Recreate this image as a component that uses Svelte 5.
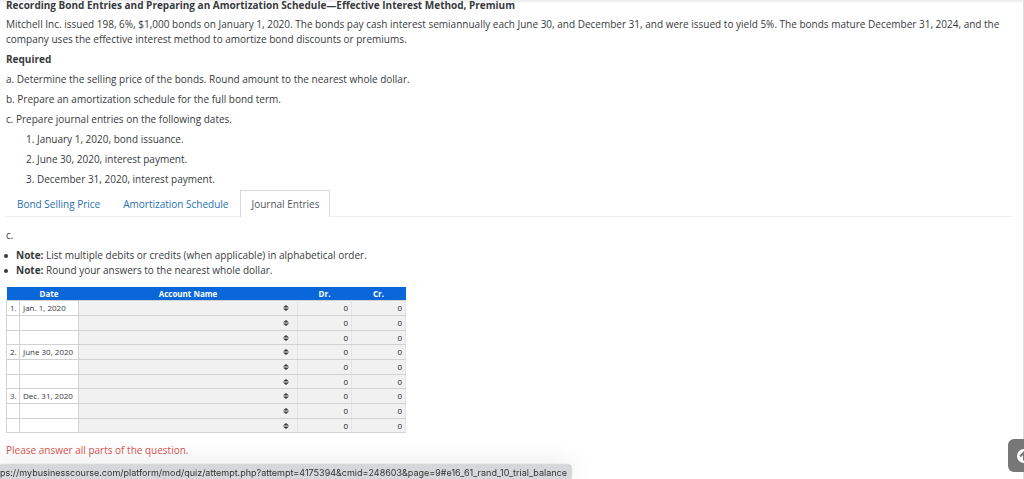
<script>
  const groups = [
    { no: '1.', date: 'Jan. 1, 2020' },
    { no: '2.', date: 'June 30, 2020' },
    { no: '3.', date: 'Dec. 31, 2020' }
  ];
  const lines = [0, 1, 2];
  const tabs = ['Bond Selling Price', 'Amortization Schedule', 'Journal Entries'];
  let active = $state(2);
</script>

<main>
  <h1>Recording Bond Entries and Preparing an Amortization Schedule—Effective Interest Method, Premium</h1>
  <p>Mitchell Inc. issued 198, 6%, $1,000 bonds on January 1, 2020. The bonds pay cash interest semiannually each June 30, and December 31, and were issued to yield 5%. The bonds mature December 31, 2024, and the company uses the effective interest method to amortize bond discounts or premiums.</p>
  <p><strong>Required</strong></p>
  <p>a. Determine the selling price of the bonds. Round amount to the nearest whole dollar.</p>
  <p>b. Prepare an amortization schedule for the full bond term.</p>
  <p>c. Prepare journal entries on the following dates.</p>
  <div class="dates">
    <p>1. January 1, 2020, bond issuance.</p>
    <p>2. June 30, 2020, interest payment.</p>
    <p>3. December 31, 2020, interest payment.</p>
  </div>

  <div class="tabs" role="tablist">
    {#each tabs as tab, i}
      <button type="button" role="tab" aria-selected={active === i} class:active={active === i} onclick={() => (active = i)}>{tab}</button>
    {/each}
  </div>

  <p class="part">c.</p>
  <ul>
    <li><strong>Note:</strong> List multiple debits or credits (when applicable) in alphabetical order.</li>
    <li><strong>Note:</strong> Round your answers to the nearest whole dollar.</li>
  </ul>

  <table>
    <colgroup>
      <col class="no" /><col class="date" /><col class="account" /><col class="amount" /><col class="amount" />
    </colgroup>
    <thead>
      <tr><th></th><th>Date</th><th>Account Name</th><th>Dr.</th><th>Cr.</th></tr>
    </thead>
    {#each groups as group}
      <tbody>
        {#each lines as line}
          <tr>
            <td class="label">{line === 0 ? group.no : ''}</td>
            <td class="label">{line === 0 ? group.date : ''}</td>
            <td class="field">
              <div class="picker">
                <select aria-label="Account name, {group.date}, line {line + 1}"><option></option></select>
                <svg viewBox="0 0 6 6" aria-hidden="true"><path d="M3 0 6 2.5H0zM3 6 0 3.5H6z" /></svg>
              </div>
            </td>
            <td class="field"><input aria-label="Debit, {group.date}, line {line + 1}" value="0" /></td>
            <td class="field"><input aria-label="Credit, {group.date}, line {line + 1}" value="0" /></td>
          </tr>
        {/each}
      </tbody>
    {/each}
  </table>

  <p class="warning">Please answer all parts of the question.</p>
</main>

<button type="button" class="top" aria-label="Back to top">
  <svg viewBox="0 0 16 16" aria-hidden="true">
    <circle cx="8" cy="8" r="8" fill="#fff" />
    <path d="M8 13V4.5M3.5 8.6 8 4.1l4.5 4.5" fill="none" stroke="#777" stroke-width="2.4" />
  </svg>
</button>

<div class="status">ps://mybusinesscourse.com/platform/mod/quiz/attempt.php?attempt=4175394&amp;cmid=248603&amp;page=9#e16_61_rand_10_trial_balance</div>

<style>
  :global(body) {
    background: #fff;
    color: #373a3c;
    font: 10px/15px "Open Sans", "Noto Sans", sans-serif;
    overflow: hidden;
  }
  main {
    padding: 0 11px 0 6px;
    border-right: 1px solid #ddd;
    box-shadow: inset 0 3px 2px -1px #eee;
  }
  h1 {
    margin: 0 0 6px;
    font-size: 10px;
    line-height: 11px;
    font-weight: 700;
  }
  p {
    margin: 0 0 5px;
  }
  strong {
    font-weight: 700;
  }
  .dates {
    padding-left: 20px;
  }
  .dates p:last-child {
    margin-bottom: 3px;
  }
  .tabs {
    display: flex;
    border-bottom: 1px solid #eceeef;
  }
  .tabs button {
    margin: 0 1px -1px 0;
    padding: 6px 10px 5px;
    border: 1px solid transparent;
    border-bottom: 0;
    background: none;
    color: #1f70b0;
    font: inherit;
  }
  .tabs .active {
    border-color: #d5dae0;
    background: #fff;
    color: #55595c;
  }
  .part {
    margin: 11px 0 5px;
  }
  ul {
    margin: 0 0 9px;
    padding: 0;
    list-style: none;
  }
  li {
    display: flex;
    align-items: center;
    white-space: pre;
  }
  li::before {
    content: "";
    width: 4px;
    height: 4px;
    margin: 0 8px 0 -2px;
    border-radius: 50%;
    background: #373a3c;
  }
  table {
    width: 400px;
    table-layout: fixed;
    border-collapse: collapse;
    font-size: 8px;
    line-height: 12px;
  }
  .no { width: 13px; }
  .date { width: 59px; }
  .amount { width: 54px; }
  th, td {
    padding: 0;
  }
  th {
    height: 13px;
    background: #0967d9;
    color: #fff;
    font-weight: 700;
  }
  td {
    height: 14px;
    border: 1px solid #d2d2d2;
  }
  tr:last-child td {
    height: 13px;
  }
  .label {
    padding-left: 3px;
    white-space: nowrap;
  }
  .field {
    border-left-color: #e4e4e4;
    border-right-color: #e4e4e4;
    background: #f1f1f1;
  }
  .picker {
    display: flex;
    align-items: center;
    padding-right: 8px;
  }
  select {
    flex: 1;
    min-width: 0;
    height: 12px;
    border: 0;
    background: none;
    appearance: none;
  }
  .picker svg {
    width: 6px;
    height: 6px;
    fill: #373a3c;
  }
  input {
    display: block;
    box-sizing: border-box;
    width: 100%;
    height: 12px;
    padding: 0 3px;
    border: 0;
    background: none;
    color: #222;
    font: inherit;
    text-align: right;
  }
  .warning {
    margin: 10px 0 0;
    padding-bottom: 24px;
    color: #d9534f;
  }
  .top {
    position: fixed;
    right: -16px;
    bottom: 7px;
    width: 32px;
    height: 33px;
    padding: 0 0 0 9px;
    border: 0;
    border-radius: 6px;
    background: #777;
  }
  .top svg {
    display: block;
    width: 14px;
    height: 14px;
  }
  .status {
    position: fixed;
    left: 0;
    bottom: 0;
    padding: 2px 4px 0 0;
    border-top-right-radius: 3px;
    background: #d5d7dc;
    box-shadow: 0 0 2px #888, 0 0 24px #0002;
    color: #333;
    font: 9px/12px Inter, sans-serif;
    white-space: nowrap;
  }
</style>
